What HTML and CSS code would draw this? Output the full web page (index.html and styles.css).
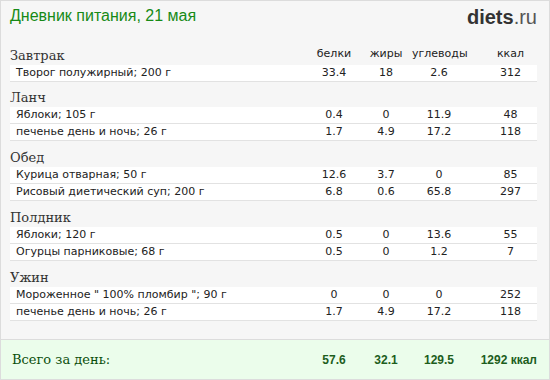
FILE: index.html
```html
<!DOCTYPE html>
<html lang="ru">
<head>
<meta charset="utf-8">
<title>Дневник питания</title>
<link rel="stylesheet" href="styles.css">
</head>
<body>
<div class="panel">
  <header class="top">
    <h1 class="title">Дневник питания, 21 мая</h1>
    <div class="logo"><b>diets</b>.ru</div>
  </header>

  <section class="meal">
    <div class="meal-head grid short">
      <span class="meal-name">Завтрак</span>
      <span class="label">белки</span>
      <span class="label">жиры</span>
      <span class="label">углеводы</span>
      <span class="label kcal">ккал</span>
    </div>
    <div class="row grid"><span class="name">Творог полужирный; 200 г</span><span>33.4</span><span>18</span><span>2.6</span><span class="kcal">312</span></div>
  </section>

  <section class="meal">
    <div class="meal-head grid short"><span class="meal-name">Ланч</span></div>
    <div class="row grid"><span class="name">Яблоки; 105 г</span><span>0.4</span><span>0</span><span>11.9</span><span class="kcal">48</span></div>
    <div class="row grid"><span class="name">печенье день и ночь; 26 г</span><span>1.7</span><span>4.9</span><span>17.2</span><span class="kcal">118</span></div>
  </section>

  <section class="meal">
    <div class="meal-head grid"><span class="meal-name">Обед</span></div>
    <div class="row grid"><span class="name">Курица отварная; 50 г</span><span>12.6</span><span>3.7</span><span>0</span><span class="kcal">85</span></div>
    <div class="row grid"><span class="name">Рисовый диетический суп; 200 г</span><span>6.8</span><span>0.6</span><span>65.8</span><span class="kcal">297</span></div>
  </section>

  <section class="meal">
    <div class="meal-head grid"><span class="meal-name">Полдник</span></div>
    <div class="row grid"><span class="name">Яблоки; 120 г</span><span>0.5</span><span>0</span><span>13.6</span><span class="kcal">55</span></div>
    <div class="row grid"><span class="name">Огурцы парниковые; 68 г</span><span>0.5</span><span>0</span><span>1.2</span><span class="kcal">7</span></div>
  </section>

  <section class="meal">
    <div class="meal-head grid"><span class="meal-name">Ужин</span></div>
    <div class="row grid"><span class="name">Мороженное " 100% пломбир "; 90 г</span><span>0</span><span>0</span><span>0</span><span class="kcal">252</span></div>
    <div class="row grid"><span class="name">печенье день и ночь; 26 г</span><span>1.7</span><span>4.9</span><span>17.2</span><span class="kcal">118</span></div>
  </section>

  <footer class="total grid">
    <span class="total-label">Всего за день:</span>
    <span>57.6</span>
    <span>32.1</span>
    <span>129.5</span>
    <span class="total-kcal">1292 ккал</span>
  </footer>
</div>
</body>
</html>
```

FILE: styles.css
```css
html, body {
  margin: 0;
  padding: 0;
  background: #ffffff;
}

.panel {
  box-sizing: border-box;
  width: 550px;
  height: 380px;
  border: 1px solid #dcdcdc;
  background: #f6f6f6;
  display: flex;
  flex-direction: column;
}

.top {
  height: 39px;
  display: flex;
  justify-content: space-between;
  align-items: flex-start;
  padding: 0 12px 0 9px;
  box-sizing: border-box;
}

.title {
  margin: 6px 0 0;
  font: normal 16px/18px "Liberation Sans", Arial, sans-serif;
  color: #178a17;
}

.logo {
  margin-top: 5px;
  font: normal 20px/22px "Liberation Sans", Arial, sans-serif;
  color: #555;
}

.logo b {
  font-weight: bold;
  color: #333;
}

.grid {
  display: grid;
  grid-template-columns: 1fr 52px 52px 54px 71px;
  margin: 0 12px 0 9px;
}

.meal-head {
  height: 26px;
  box-sizing: border-box;
  align-items: end;
  padding-bottom: 1px;
}

.meal-head.short {
  height: 25px;
}

.meal-name {
  font: normal 13px/17px "DejaVu Serif", Georgia, serif;
  color: #333;
}

.label {
  font: normal 11px/17px "DejaVu Sans", Verdana, sans-serif;
  color: #222;
  text-align: center;
  padding-bottom: 2px;
}

.kcal {
  padding-left: 18px;
}

.row {
  height: 17px;
  box-sizing: border-box;
  background: #ffffff;
  border-bottom: 1px solid #e2e2e2;
  font: normal 11px/16px "DejaVu Sans", Verdana, sans-serif;
  color: #222;
  text-align: center;
}

.row .name {
  text-align: left;
  padding-left: 6px;
}

.total {
  margin: auto 0 0;
  height: 40px;
  box-sizing: border-box;
  border-top: 1px solid #dcdcdc;
  background: #ebfdeb;
  align-items: center;
  padding: 0 12px 0 9px;
  font: bold 12px/16px "Liberation Sans", Arial, sans-serif;
  color: #1d5e1d;
  text-align: center;
  white-space: nowrap;
}

.total-label {
  text-align: left;
  padding-left: 2px;
  font: normal 13px/17px "DejaVu Serif", Georgia, serif;
  color: #0b4f0b;
}

.total-kcal {
  text-align: right;
}
```
